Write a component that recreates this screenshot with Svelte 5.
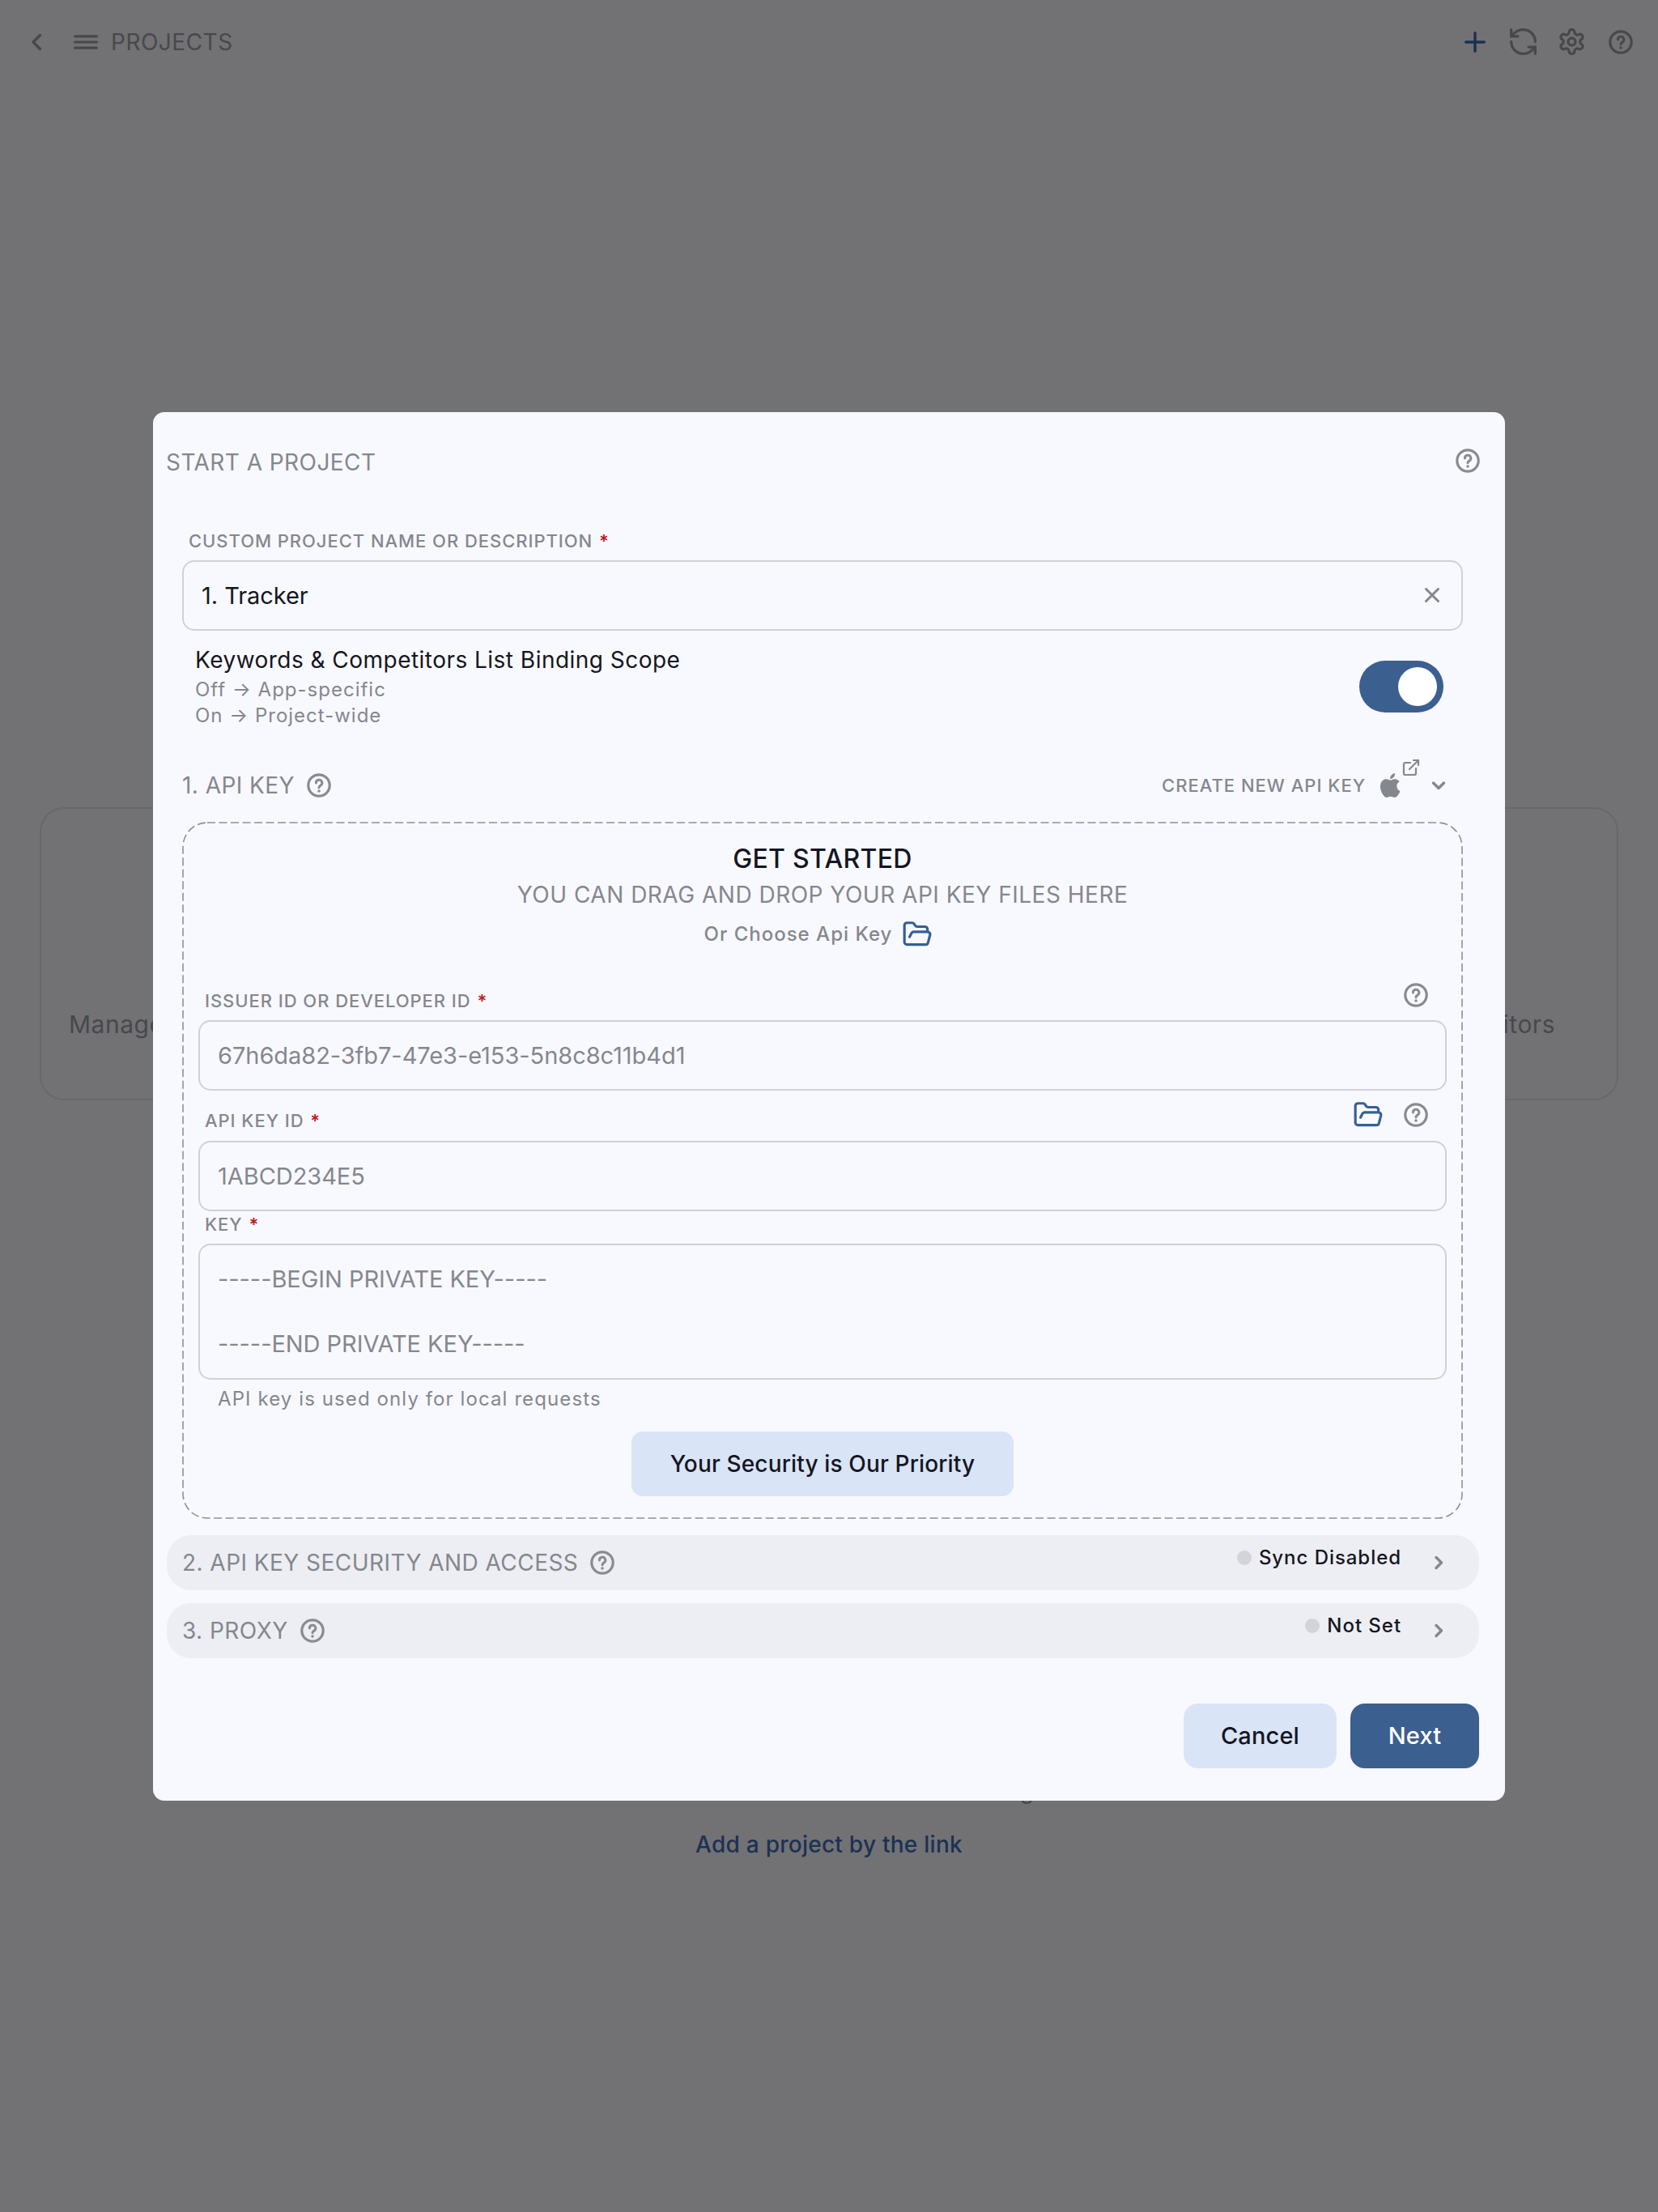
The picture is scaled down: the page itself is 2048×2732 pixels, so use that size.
<script lang="ts">
  const keyPlaceholder = '-----BEGIN PRIVATE KEY-----\n\n-----END PRIVATE KEY-----';
</script>

{#snippet help(cls = '')}
  <svg class="help {cls}" viewBox="0 0 30 30" fill="none" stroke="currentColor" aria-hidden="true">
    <circle cx="15" cy="15" r="13.2" stroke-width="3.2" />
    <path d="M11.4 12a3.7 3.7 0 1 1 5.6 3.1c-1.2.7-2 1.4-2 2.6" stroke-width="3" stroke-linecap="round" />
    <circle cx="15" cy="22" r="1.8" fill="currentColor" stroke="none" />
  </svg>
{/snippet}

{#snippet folder()}
  <svg class="folder" viewBox="0 0 24 24" fill="none" stroke="currentColor" stroke-width="2" stroke-linecap="round" stroke-linejoin="round" aria-hidden="true">
    <path d="m6 14 1.5-2.9A2 2 0 0 1 9.24 10H20a2 2 0 0 1 1.94 2.5l-1.54 6a2 2 0 0 1-1.95 1.5H4a2 2 0 0 1-2-2V5a2 2 0 0 1 2-2h3.9a2 2 0 0 1 1.69.9l.81 1.2a2 2 0 0 0 1.67.9H18a2 2 0 0 1 2 2v2" />
  </svg>
{/snippet}

{#snippet chevronRight()}
  <svg class="chev-right" viewBox="0 0 12 18" fill="none" stroke="currentColor" stroke-width="3.4" stroke-linecap="round" stroke-linejoin="round" aria-hidden="true">
    <path d="M3 2.5 9.5 9 3 15.5" />
  </svg>
{/snippet}

<div class="page">
  <header class="topbar">
    <svg class="back" viewBox="0 0 14 22" fill="none" stroke="currentColor" stroke-width="3.4" stroke-linecap="round" stroke-linejoin="round" aria-hidden="true">
      <path d="M11.5 2.5 3 11l8.500 8.500" />
    </svg>
    <svg class="menu" viewBox="0 0 30 18" fill="none" stroke="currentColor" stroke-width="3.2" stroke-linecap="round" aria-hidden="true">
      <path d="M1.600 1.800h26.800M1.600 9h26.800M1.600 16.200h26.800" />
    </svg>
    <span class="top-title">PROJECTS</span>
    <div class="top-actions">
      <svg class="plus" viewBox="0 0 24 24" fill="none" stroke="currentColor" stroke-width="3.200" stroke-linecap="round" aria-hidden="true">
        <path d="M12 1.600v20.800M1.600 12h20.800" />
      </svg>
      <svg class="top-icon sync" viewBox="2 2 20 20" fill="none" stroke="currentColor" stroke-width="2" stroke-linecap="round" stroke-linejoin="round" aria-hidden="true">
        <path d="M21 12a9 9 0 0 0-9-9 9.750 9.750 0 0 0-6.740 2.740L3 8" />
        <path d="M3 3v5h5" />
        <path d="M3 12a9 9 0 0 0 9 9 9.750 9.750 0 0 0 6.740-2.740L21 16" />
        <path d="M16 16h5v5" />
      </svg>
      <svg class="top-icon gear" viewBox="1 1 22 22" fill="none" stroke="currentColor" stroke-width="2.2" stroke-linecap="round" stroke-linejoin="round" aria-hidden="true">
        <path d="M12.220 2h-.44a2 2 0 0 0-2 2v.18a2 2 0 0 1-1 1.730l-.43.25a2 2 0 0 1-2 0l-.15-.08a2 2 0 0 0-2.730.73l-.22.38a2 2 0 0 0 .73 2.730l.15.1a2 2 0 0 1 1 1.720v.51a2 2 0 0 1-1 1.740l-.15.09a2 2 0 0 0-.73 2.730l.22.38a2 2 0 0 0 2.730.73l.15-.08a2 2 0 0 1 2 0l.43.25a2 2 0 0 1 1 1.730V20a2 2 0 0 0 2 2h.44a2 2 0 0 0 2-2v-.18a2 2 0 0 1 1-1.730l.43-.25a2 2 0 0 1 2 0l.15.08a2 2 0 0 0 2.730-.73l.22-.39a2 2 0 0 0-.73-2.730l-.15-.08a2 2 0 0 1-1-1.740v-.5a2 2 0 0 1 1-1.740l.15-.09a2 2 0 0 0 .73-2.730l-.22-.38a2 2 0 0 0-2.730-.73l-.15.08a2 2 0 0 1-2 0l-.43-.25a2 2 0 0 1-1-1.730V4a2 2 0 0 0-2-2z" />
        <circle cx="12" cy="12" r="3" />
      </svg>
      {@render help('top-help')}
    </div>
  </header>

  <section class="cards">
    <div class="card"><span>Manage Apps</span></div>
    <div class="card"><span>Track</span></div>
    <div class="card card-right"><span>Competitors</span></div>
  </section>

  <p class="empty-note">Create a new tracker to start adding</p>
  <p class="add-link">Add a project by the link</p>
</div>

<div class="overlay">
  <div class="modal">
    <div class="modal-head">
      <h2>START A PROJECT</h2>
      {@render help()}
    </div>

    <div class="field name-field">
      <div class="label-row"><label for="name">CUSTOM PROJECT NAME OR DESCRIPTION <b>*</b></label></div>
      <div class="input-wrap">
        <input id="name" class="input dark" value="1. Tracker" />
        <svg class="clear" viewBox="0 0 20 20" fill="none" stroke="currentColor" stroke-width="3" stroke-linecap="round" aria-hidden="true">
          <path d="M2.500 2.500l15 15M17.500 2.500l-15 15" />
        </svg>
      </div>
    </div>

    <div class="scope">
      <div>
        <div class="scope-title">Keywords &amp; Competitors List Binding Scope</div>
        <div class="scope-sub">Off → App-specific</div>
        <div class="scope-sub">On → Project-wide</div>
      </div>
      <div class="toggle"><span class="knob"></span></div>
    </div>

    <div class="section-head">
      <span class="section-title">1. API KEY</span>
      {@render help()}
      <div class="create">
        <span>CREATE NEW API KEY</span>
        <svg class="apple" viewBox="3 0 18.500 24" fill="currentColor" aria-hidden="true">
          <path d="M12.152 6.896c-.948 0-2.415-1.078-3.960-1.040-2.040.027-3.910 1.183-4.961 3.014-2.117 3.675-.546 9.103 1.519 12.090 1.013 1.454 2.208 3.090 3.792 3.039 1.520-.065 2.090-.987 3.935-.987 1.831 0 2.350.987 3.960.948 1.637-.026 2.676-1.480 3.676-2.948 1.156-1.688 1.636-3.325 1.662-3.415-.039-.013-3.182-1.221-3.220-4.857-.026-3.040 2.480-4.494 2.597-4.559-1.429-2.090-3.623-2.324-4.390-2.376-2-.156-3.675 1.090-4.610 1.090zM15.530 3.830c.843-1.012 1.400-2.427 1.245-3.830-1.207.052-2.662.805-3.532 1.818-.78.896-1.454 2.338-1.273 3.714 1.338.104 2.715-.688 3.559-1.701" />
        </svg>
        <svg class="external" viewBox="0 0 24 24" fill="none" stroke="currentColor" stroke-width="2.200" stroke-linecap="round" stroke-linejoin="round" aria-hidden="true">
          <path d="M15 3h6v6" />
          <path d="M10 14 21 3" />
          <path d="M18 13v6a2 2 0 0 1-2 2H5a2 2 0 0 1-2-2V8a2 2 0 0 1 2-2h6" />
        </svg>
        <svg class="chev-down" viewBox="0 0 18 12" fill="none" stroke="currentColor" stroke-width="3.400" stroke-linecap="round" stroke-linejoin="round" aria-hidden="true">
          <path d="M2.500 3 9 9.500 15.500 3" />
        </svg>
      </div>
    </div>

    <div class="dropzone">
      <svg class="dash-border" aria-hidden="true"><rect /></svg>
      <div class="get-started">GET STARTED</div>
      <div class="drag-hint">YOU CAN DRAG AND DROP YOUR API KEY FILES HERE</div>
      <div class="choose">
        <span>Or Choose Api Key</span>
        {@render folder()}
      </div>

      <div class="field issuer">
        <div class="label-row">
          <label for="issuer">ISSUER ID OR DEVELOPER ID <b>*</b></label>
          <div class="label-icons">{@render help()}</div>
        </div>
        <input id="issuer" class="input" placeholder="67h6da82-3fb7-47e3-e153-5n8c8c11b4d1" />
      </div>

      <div class="field key-id">
        <div class="label-row">
          <label for="keyid">API KEY ID <b>*</b></label>
          <div class="label-icons">{@render folder()}{@render help()}</div>
        </div>
        <input id="keyid" class="input" placeholder="1ABCD234E5" />
      </div>

      <div class="field key">
        <div class="label-row"><label for="key">KEY <b>*</b></label></div>
        <textarea id="key" class="input area" rows="3" placeholder={keyPlaceholder}></textarea>
      </div>

      <div class="local-note">API key is used only for local requests</div>
      <button class="btn soft security">Your Security is Our Priority</button>
    </div>

    <div class="accordion first">
      <span class="section-title">2. API KEY SECURITY AND ACCESS</span>
      {@render help()}
      <span class="status"><i class="dot"></i>Sync Disabled</span>
      {@render chevronRight()}
    </div>
    <div class="accordion second">
      <span class="section-title">3. PROXY</span>
      {@render help()}
      <span class="status"><i class="dot"></i>Not Set</span>
      {@render chevronRight()}
    </div>

    <div class="modal-actions">
      <button class="btn soft cancel">Cancel</button>
      <button class="btn primary next">Next</button>
    </div>
  </div>
</div>

<style>
  :global(body) {
    margin: 0;
    background: #727275;
    font-family: Inter, "Liberation Sans", sans-serif;
  }

  .page {
    height: 2732px;
    box-sizing: border-box;
    color: #48484b;
    overflow: hidden;
  }

  .topbar {
    display: flex;
    align-items: center;
    height: 103px;
    padding: 0 31px 0 38px;
  }

  .back { width: 14px; height: 22px; }
  .menu { width: 30px; height: 18px; margin-left: 39px; }

  .top-title {
    margin-left: 16px;
    font-size: 28px;
    letter-spacing: 0.5px;
  }

  .top-actions {
    display: flex;
    align-items: center;
    margin-left: auto;
  }

  .plus { width: 26px; height: 26px; color: #1c3152; margin-right: 30px; }
  .sync { width: 33px; height: 33px; margin-right: 28px; }
  .gear { width: 33px; height: 33px; margin-right: 29px; margin-left: -1px; }
  .top-actions :global(.top-help) { width: 30px; height: 30px; margin: 0; color: #48484b; }

  .cards {
    display: grid;
    grid-template-columns: 1fr 1fr 1fr;
    gap: 24px;
    margin: 894px 49px 0;
  }

  .card {
    display: flex;
    align-items: flex-end;
    height: 362px;
    box-sizing: border-box;
    padding: 0 34px 74px;
    border: 2px solid #68686b;
    border-radius: 30px;
    font-size: 30px;
    letter-spacing: 0.5px;
  }

  .card-right { justify-content: flex-end; padding-right: 76px; }

  .empty-note {
    margin: 836px 0 0;
    padding-left: 20px;
    text-align: center;
    font-size: 28px;
    line-height: 34px;
    letter-spacing: 0.3px;
  }

  .add-link {
    margin: 32px 0 0;
    text-align: center;
    color: #1c3152;
    font-size: 28px;
    line-height: 34px;
    font-weight: 500;
    letter-spacing: 0.25px;
  }

  .overlay {
    position: fixed;
    inset: 0;
    display: flex;
    align-items: center;
    justify-content: center;
  }

  .modal {
    width: 1670px;
    height: 1715px;
    box-sizing: border-box;
    background: #f8f9ff;
    border-radius: 14px;
    color: #85878e;
  }

  .help {
    flex: none;
    width: 30px;
    height: 30px;
    color: #8a8b91;
  }

  .modal-head {
    display: flex;
    align-items: center;
    justify-content: space-between;
    height: 124px;
    padding: 0 31px 0 16px;
  }

  .modal-head .help { margin-top: -3px; }

  .modal-head h2 {
    margin: 0;
    font-size: 28px;
    font-weight: 400;
    letter-spacing: 0.45px;
  }

  .label-row {
    display: flex;
    align-items: flex-start;
    justify-content: space-between;
    height: 28px;
    padding-left: 8px;
  }

  label {
    font-size: 22px;
    line-height: 28px;
    font-weight: 500;
    letter-spacing: 0.95px;
  }

  label b { color: #c5121c; font-weight: 600; margin-left: 1px; }

  .input {
    display: block;
    width: 100%;
    height: 87px;
    box-sizing: border-box;
    padding: 0 22px;
    border: 2px solid #d0d1d8;
    border-radius: 15px;
    background: transparent;
    font-family: inherit;
    font-size: 29px;
    letter-spacing: -0.05px;
    color: #85878e;
    outline: none;
  }

  .input::placeholder { color: #85878e; opacity: 1; }
  .input.dark { color: #14161f; }

  .area {
    height: 168px;
    padding: 22px 22px;
    line-height: 40px;
    resize: none;
  }

  .name-field { margin: 21px 52px 0 36px; }
  .name-field .label-row { margin-bottom: 10px; }

  .input-wrap { position: relative; }

  .clear {
    position: absolute;
    right: 28px;
    top: 33px;
    width: 20px;
    height: 20px;
    color: #85878e;
  }

  .scope {
    display: flex;
    align-items: center;
    justify-content: space-between;
    margin: 18px 76px 0 52px;
  }

  .scope-title {
    font-size: 28px;
    line-height: 36px;
    color: #14161f;
    letter-spacing: 0.47px;
  }

  .scope-sub {
    font-size: 24px;
    line-height: 32px;
    letter-spacing: 1px;
  }

  .scope-title + .scope-sub { margin-top: 3px; }

  .toggle {
    display: flex;
    align-items: center;
    justify-content: flex-end;
    width: 104px;
    height: 64px;
    box-sizing: border-box;
    padding-right: 8px;
    border-radius: 32px;
    background: #3b5f8f;
  }

  .knob {
    width: 48px;
    height: 48px;
    border-radius: 50%;
    background: #fff;
  }

  .section-head {
    display: flex;
    align-items: center;
    height: 40px;
    margin: 50px 52px 0 36px;
    gap: 15px;
  }

  .section-title {
    font-size: 28px;
    letter-spacing: 0.45px;
  }

  .create {
    position: relative;
    display: flex;
    align-items: center;
    margin-left: auto;
    font-size: 22px;
    font-weight: 500;
    letter-spacing: 1px;
  }

  .apple { width: 25px; height: 30px; margin-left: 18px; }

  .external {
    position: absolute;
    right: 52px;
    top: -19px;
    width: 24px;
    height: 24px;
  }

  .chev-down { width: 18px; height: 12px; margin-left: 38px; margin-right: 21px; }

  .dropzone {
    position: relative;
    display: flex;
    flex-direction: column;
    height: 861px;
    box-sizing: border-box;
    margin: 25px 52px 0 36px;
    padding: 28px 20px 0;
  }

  .dash-border {
    position: absolute;
    inset: 0;
    width: 100%;
    height: 100%;
    pointer-events: none;
  }

  .dash-border rect {
    x: 1px;
    y: 1px;
    width: calc(100% - 2px);
    height: calc(100% - 2px);
    rx: 30px;
    fill: none;
    stroke: #8f9097;
    stroke-width: 1.6px;
    stroke-dasharray: 10 4.5;
  }

  .get-started {
    text-align: center;
    font-size: 32px;
    line-height: 36px;
    font-weight: 500;
    letter-spacing: 0.3px;
    color: #14161f;
  }

  .drag-hint {
    margin-top: 8px;
    text-align: center;
    font-size: 28px;
    line-height: 36px;
    letter-spacing: 0.5px;
  }

  .choose {
    display: flex;
    align-items: center;
    justify-content: center;
    gap: 12px;
    height: 32px;
    margin-top: 15px;
    padding-right: 10px;
    font-size: 24px;
    font-weight: 500;
    letter-spacing: 1px;
  }

  .folder { width: 38px; height: 38px; color: #355f96; flex: none; }

  .issuer { margin-top: 52px; }
  .issuer .label-row { margin-bottom: 10px; }
  .key-id { margin-top: 23px; }
  .key-id .label-row { margin-bottom: 11px; }
  .key { margin-top: 2px; }
  .key .label-row { margin-bottom: 10px; }

  .label-icons {
    display: flex;
    align-items: center;
    gap: 25px;
    margin-top: -8px;
    margin-right: 23px;
  }

  .key-id .label-icons { margin-top: -12px; }

  .local-note {
    margin-top: 8px;
    padding-left: 24px;
    font-size: 24px;
    line-height: 32px;
    letter-spacing: 1.1px;
  }

  .btn {
    border: none;
    font-family: inherit;
    font-weight: 500;
    letter-spacing: 0.15px;
  }

  .soft { background: #d9e4f7; color: #14161f; }
  .primary { background: #3b5f8f; color: #fff; }

  .security {
    align-self: center;
    width: 472px;
    height: 80px;
    margin-top: 24px;
    border-radius: 14px;
    font-size: 28px;
  }

  .accordion {
    display: flex;
    align-items: center;
    gap: 15px;
    height: 68px;
    box-sizing: border-box;
    margin: 0 32px 0 17px;
    padding: 0 44px 0 19px;
    border-radius: 30px;
    background: #edeef3;
  }

  .first { margin-top: 20px; }
  .second { margin-top: 16px; }

  .status {
    display: flex;
    align-items: center;
    margin-left: auto;
    margin-top: -12px;
    font-size: 24px;
    font-weight: 500;
    letter-spacing: 0.95px;
    color: #14161f;
  }

  .dot {
    width: 18px;
    height: 18px;
    margin-right: 9px;
    border-radius: 50%;
    background: #d3d4da;
  }

  .chev-right { width: 12px; height: 18px; margin-left: 25px; margin-top: 0; }

  .modal-actions {
    display: flex;
    justify-content: flex-end;
    gap: 17px;
    margin: 56px 32px 0 0;
  }

  .cancel, .next {
    height: 80px;
    border-radius: 18px;
    font-size: 29px;
  }

  .cancel { width: 189px; }
  .next { width: 159px; }
</style>
